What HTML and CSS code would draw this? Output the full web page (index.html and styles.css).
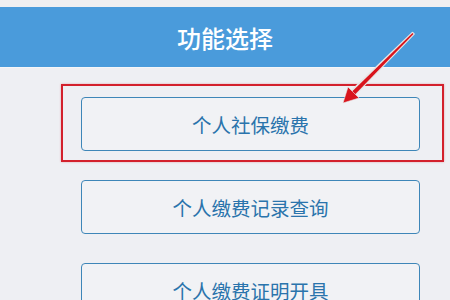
FILE: index.html
```html
<!DOCTYPE html>
<html lang="zh">
<head>
<meta charset="utf-8">
<link rel="stylesheet" href="styles.css">
</head>
<body>
<div class="page">
  <div class="topstrip"></div>
  <header class="header">功能选择</header>
  <main class="menu">
    <div class="btn">个人社保缴费</div>
    <div class="btn">个人缴费记录查询</div>
    <div class="btn">个人缴费证明开具</div>
  </main>
  <div class="highlight"></div>
  <svg class="arrow" width="450" height="300" viewBox="0 0 450 300">
    <polygon points="412.5,32.5 414,34 354,96 350,92" fill="#f4f4f4" stroke="#e6e6e6" stroke-width="1.6" stroke-linejoin="round"/>
    <polygon points="412.5,33 413.5,34 354,95.5 351,92.5" fill="#d9141c"/>
    <polygon points="343,103 348,87 359,98" fill="#d9141c" stroke="#e8e8e8" stroke-width="0.6" stroke-linejoin="round"/>
  </svg>
</div>
</body>
</html>
```
FILE: styles.css
```css
html, body {
  margin: 0;
  padding: 0;
}
body {
  width: 450px;
  height: 300px;
  overflow: hidden;
  background: #eeeff3;
  font-family: "Noto Sans CJK SC", "Noto Sans", sans-serif;
}
.page {
  position: relative;
  width: 450px;
  height: 300px;
}
.topstrip {
  height: 7px;
  background: #efeff1;
}
.header {
  height: 60px;
  background: #4a9bdb;
  color: #ffffff;
  font-size: 24px;
  font-weight: 500;
  display: flex;
  align-items: center;
  justify-content: center;
  border-bottom: 1px solid #f5f6f8;
}
.menu {
  display: flex;
  flex-direction: column;
  gap: 29px;
  padding: 29px 0 0 81px;
}
.btn {
  box-sizing: border-box;
  width: 339px;
  height: 54px;
  border: 1.5px solid #3e86b8;
  border-radius: 4px;
  background: #f1f2f5;
  color: #2a74ac;
  font-size: 19.5px;
  display: flex;
  align-items: center;
  justify-content: center;
  flex-shrink: 0;
}
.highlight {
  position: absolute;
  left: 61px;
  top: 84px;
  width: 383px;
  height: 78px;
  box-sizing: border-box;
  border: 2px solid #d3202c;
  box-shadow: 0 0 2px rgba(211, 32, 44, 0.35);
}
.arrow {
  position: absolute;
  left: 0;
  top: 0;
}
```
